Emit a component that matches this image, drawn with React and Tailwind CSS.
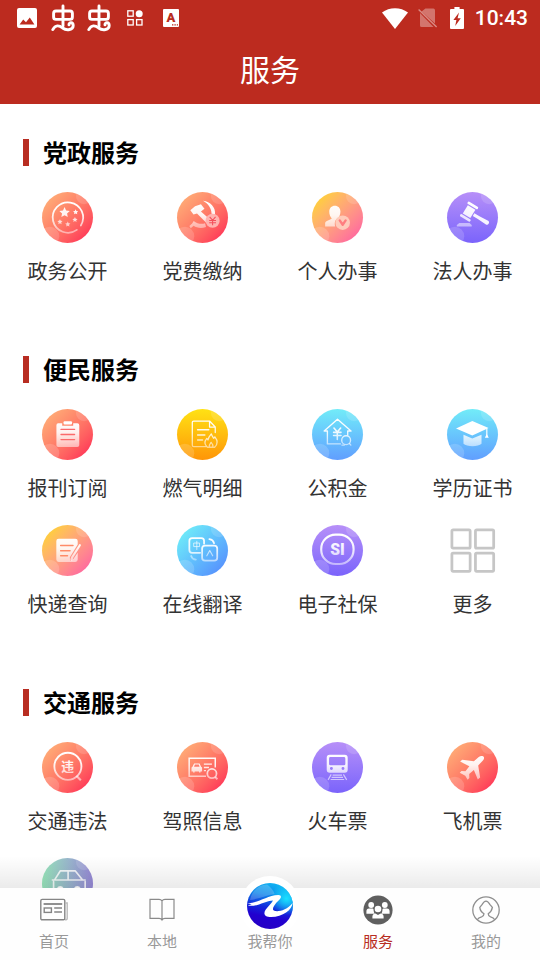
import { useState } from 'react';

const tones = {
  red: 'bg-linear-to-br from-[#ffad77] from-10% to-[#ff3358] to-90%',
  sunset: 'bg-linear-to-br from-[#ffd22e] from-10% to-[#ff65a0] to-90%',
  purple: 'bg-linear-to-b from-[#b78ff8] to-[#7b63fb]',
  amber: 'bg-linear-to-b from-[#ffe214] to-[#ff9508]',
  sky: 'bg-linear-to-b from-[#72ecf8] to-[#619efe]',
  ocean: 'bg-linear-to-br from-[#70edf8] from-10% to-[#5790fd] to-90%',
  mint: 'bg-linear-to-r from-[#98e6bb] to-[#9688d6]',
};

// shared white fade used by every glyph that sits on a coloured disc
const FADE = 'url(#fade)';

function FadeDefs() {
  return (
    <svg className="absolute size-0" aria-hidden="true">
      <defs>
        <linearGradient id="fade" gradientUnits="userSpaceOnUse" x1="0" y1="10" x2="0" y2="40">
          <stop offset="0" stopColor="#fff" />
          <stop offset="0.45" stopColor="#fff" stopOpacity="0.9" />
          <stop offset="1" stopColor="#fff" stopOpacity="0.5" />
        </linearGradient>
      </defs>
    </svg>
  );
}

function Star({ x, y, r }) {
  const points = Array.from({ length: 10 }, (_, i) => {
    const radius = i % 2 ? r * 0.48 : r;
    const a = (Math.PI / 5) * i - Math.PI / 2;
    return `${(x + radius * Math.cos(a)).toFixed(2)},${(y + radius * Math.sin(a)).toFixed(2)}`;
  });
  return <polygon points={points.join(' ')} fill={FADE} />;
}

const glyphs = {
  stars: (
    <>
      <path d="M35.5 38.6 A15.5 15.5 0 1 1 39.6 34.2" fill="none" stroke={FADE} strokeWidth="1.8" strokeLinecap="round" />
      <Star x={23} y={21} r={5.6} />
      <Star x={34.3} y={20.5} r={2.8} />
      <Star x={33.6} y={28.3} r={2.8} />
      <Star x={26.3} y={33} r={2.8} />
      <Star x={18.3} y={30.5} r={2.8} />
    </>
  ),
  party: (
    <>
      <path d="M26.5 9 C34 10 39.5 15.5 38.8 23 L35.2 22.3 C35.3 17 32 12 26.5 9 Z" fill={FADE} />
      <path d="M17 29.5 C20.5 32.3 25 33.2 28.6 31.8 L29.6 35.6 C24.5 37.8 19.8 36.4 17 34.4 L14 37 L12.6 34.6 L15.4 32.2 Z" fill={FADE} opacity="0.75" />
      <path d="M13.6 18.6 L18.4 14.6 L24.4 12.6 L28 17 L24.4 19.8 L33.6 28 L29.8 31.4 L20.4 21.8 L16.8 23 Z" fill={FADE} />
      <circle cx="36.3" cy="29.3" r="7.2" fill="#ffb3b0" />
      <path d="M33.3 25.3 L36.3 28.8 L39.3 25.3 M36.3 28.8 V34 M32.8 29 H39.8 M32.8 31.4 H39.8" fill="none" stroke="#f4505c" strokeWidth="1.1" />
    </>
  ),
  person: (
    <>
      <path d="M17.6 20 C17.6 16.4 20 14 23.3 14 C26.6 14 29 16.4 29 20 C29 23 27.8 25.4 26.4 26.6 C23.6 28 22.6 31.5 23.6 35.2 H13.4 V31.6 C13.8 29 18.6 28.8 20.2 27 C18.4 25.4 17.6 22.8 17.6 20 Z" fill={FADE} />
      <circle cx="31.3" cy="31.3" r="7.4" fill="#ffd0c0" fillOpacity="0.9" />
      <path d="M28.3 29 L31.3 33.4 L34.3 29" fill="none" stroke="#ff7d80" strokeWidth="2.4" strokeLinecap="round" strokeLinejoin="round" />
    </>
  ),
  gavel: (
    <>
      <g transform="rotate(31 22.5 20)" fill={FADE}>
        <rect x="18" y="15" width="9" height="10" />
        <rect x="16.4" y="11.2" width="12.2" height="2.8" rx="1.2" />
        <rect x="16.4" y="26" width="12.2" height="2.8" rx="1.2" />
        <path d="M28 18.6 H34 L44.5 18 C46.5 19 46.5 21.5 44.5 22.5 L34 21.8 H28 Z" />
      </g>
      <path d="M12.5 31.6 H23 L25.2 33.6 V35.2 H10 V33.6 Z" fill="#fff" opacity="0.5" />
    </>
  ),
  clipboard: (
    <>
      <path d="M16.5 14.6 H20.6 V17 H31.8 V14.6 H36 Q38 14.6 38 16.6 V37 Q38 38.8 36 38.8 H16.5 Q14.7 38.8 14.7 37 V16.6 Q14.7 14.6 16.5 14.6 Z" fill={FADE} />
      <rect x="22" y="12.4" width="8.6" height="3.4" rx="1" fill="#fff" />
      <path d="M19.4 20.8 H33.2 M19.4 26 H33.2 M19.4 31.2 H33.2" stroke="#fb6a6b" strokeWidth="1.4" strokeLinecap="round" />
    </>
  ),
  gas: (
    <g fill="none" stroke={FADE} strokeWidth="1.3" strokeLinejoin="round" strokeLinecap="round">
      <path d="M29.5 38.4 H17 Q15.6 38.4 15.6 37 V13.6 Q15.6 12.3 17 12.3 H33.2 L39 18.4 V24 M33.2 12.3 V18.4 H39" />
      <path d="M21 21.2 H32.4 M21 26.4 H28.4 M21 31.6 H26" strokeWidth="1.5" />
      <path d="M35 25.4 C35.8 28 37 28.8 37.4 30 L38.6 28.4 C41.5 32 41.6 36 38.4 39 H31 C27.6 36 28.2 32.6 30.4 30 L31.6 31.6 C32 29 33.2 27.4 35 25.4 Z M33 38.6 C32.6 36.4 34 35 34.8 34 C36.4 35.6 37 37 36.4 38.6" />
    </g>
  ),
  house: (
    <g fill="none" stroke={FADE} strokeWidth="1.4" strokeLinejoin="round" strokeLinecap="round">
      <path d="M15.7 22.4 H12.4 L26 10.4 L39.8 22.4 H36.4 V26.6 M15.7 22.4 V35.6 H29" />
      <path d="M22.4 19.4 L25.8 23.4 L29.2 19.4 M25.8 23.4 V31 M22 23.8 H29.6 M22 27 H29.6" strokeWidth="1.6" />
      <circle cx="34.8" cy="31.8" r="4.5" />
      <path d="M30.5 36.8 H33 M38.4 35.4 L39.6 36.8" />
    </g>
  ),
  graduate: (
    <>
      <path d="M25.8 12.2 L42.4 19.4 L25.8 27 L9.2 19.8 Z" fill="#fff" />
      <path d="M16.8 26.2 L25.8 30 L35.2 26.2 V35.4 C32 38.8 20 38.8 16.8 35.4 Z" fill={FADE} />
      <path d="M40.6 20 V28" stroke="#fff" strokeWidth="1.2" />
      <path d="M40.6 25.4 L42.6 29.4 H38.6 Z" fill="#fff" />
    </>
  ),
  edit: (
    <>
      <path d="M17 14 H34 Q36.4 14 36.4 16.4 V20 L28.4 33 L28.6 36.4 L32 34.6 L36.4 28.4 V35.2 Q36.4 37.6 34 37.6 H17 Q14.6 37.6 14.6 35.2 V16.4 Q14.6 14 17 14 Z" fill={FADE} />
      <path d="M19 21 H31.6 M19 26.2 H28.6 M19 31.4 H26" stroke="#ff8b68" strokeWidth="1.5" strokeLinecap="round" />
      <path d="M38.6 20.6 L31 32.6 L30 35.4" fill="none" stroke={FADE} strokeWidth="2.2" strokeLinecap="round" />
    </>
  ),
  translate: (
    <g fill="none" stroke={FADE} strokeLinejoin="round" strokeLinecap="round">
      <path d="M23.6 28.4 H15.4 Q12.6 28.4 12.6 25.6 V16.2 Q12.6 13.4 15.4 13.4 H24.8 Q27.6 13.4 27.6 16.2 V19" strokeWidth="1.8" />
      <rect x="25.6" y="21" width="15.4" height="15.4" rx="3" strokeWidth="1.8" />
      <path d="M17.4 18.4 H23 V22 H17.4 Z M20.2 16.6 V25" strokeWidth="0.9" strokeOpacity="0.8" />
      <path d="M30.4 31.4 L33.4 26 L36.4 31.4" strokeWidth="1.2" strokeOpacity="0.8" />
      <path d="M33 14.4 C35.6 14.8 37.2 16.2 37.8 18.6" strokeWidth="1.8" />
      <path d="M14.4 31.6 C15.2 34 16.8 35.2 19.2 35.4" strokeWidth="1.8" strokeOpacity="0.7" />
    </g>
  ),
  social: (
    <>
      <rect x="9.4" y="9.8" width="33" height="30" rx="14.6" fill="none" stroke={FADE} strokeWidth="2.2" />
      <text x="26" y="30.6" textAnchor="middle" fontSize="16" fontWeight="900" fill={FADE} className="font-[Roboto,sans-serif]">
        SI
      </text>
    </>
  ),
  violation: (
    <>
      <circle cx="26.4" cy="24.8" r="13.8" fill="none" stroke={FADE} strokeWidth="1.9" />
      <path d="M35 34.4 L39.6 39" stroke="#fff" strokeOpacity="0.55" strokeWidth="2.2" />
      <text x="26.2" y="29.6" textAnchor="middle" fontSize="13" fontWeight="700" fill={FADE}>
        违
      </text>
    </>
  ),
  license: (
    <g fill="none" stroke={FADE} strokeWidth="1.5">
      <path d="M29.6 35 H12.4 V16.6 H39 V26" />
      <path d="M27.4 22.6 H35.6 M27.4 26 H32.6 M27.4 29.2 H29.6" strokeWidth="1.3" />
      <path d="M17.4 22 H23 L24.6 25.2 L25.6 26 V30 H24 V31 H22.4 V30 H18 V31 H16.4 V30 H14.8 V26 L15.8 25.2 Z" fill={FADE} stroke="none" />
      <path d="M17.4 25.2 L18.2 23 H22.2 L23 25.2 Z" fill="#fd7b6b" stroke="none" />
      <circle cx="35.6" cy="32.2" r="4.7" strokeWidth="1.8" />
      <path d="M38.8 35.6 L41.2 38" strokeWidth="2" />
    </g>
  ),
  train: (
    <>
      <path fillRule="evenodd" d="M18 13 H33.4 Q36.4 13 36.4 16 V28.4 Q36.4 31.4 33.4 31.4 H18 Q15 31.4 15 28.4 V16 Q15 13 18 13 Z M18.8 15.4 Q17.4 15.4 17.4 16.8 V22.4 Q17.4 23.8 18.8 23.8 H32.6 Q34 23.8 34 22.4 V16.8 Q34 15.4 32.6 15.4 Z M19.8 25.6 A1.5 1.5 0 1 0 19.8 28.6 A1.5 1.5 0 1 0 19.8 25.6 Z M31.6 25.6 A1.5 1.5 0 1 0 31.6 28.6 A1.5 1.5 0 1 0 31.6 25.6 Z" fill={FADE} />
      <path d="M19.6 33 L16.4 38.6 M32 33 L35.4 38.6 M21 33.8 H30.6 M20 36 H31.6 M19 38.2 H32.8" fill="none" stroke="#fff" strokeOpacity="0.6" strokeWidth="1.2" />
    </>
  ),
  plane: (
    <path d="M36.8 14.6 C38.4 15.4 38 17.4 36.6 18.8 L31.8 24 L33.8 36.2 L31.4 38.2 L27.4 28.6 L22.6 32.6 L22.8 36.6 L21 38.6 L18.6 34.4 L13 31.4 L14.8 29.6 L18.8 29.8 L22.8 24.6 L13.4 20 L15.6 18 L27.4 19.6 L32.4 15.2 C34 14 35.6 14 36.8 14.6 Z" fill={FADE} />
  ),
  taxi: (
    <g fill="none" stroke="#fff" strokeOpacity="0.85" strokeWidth="1.7" strokeLinejoin="round" strokeLinecap="round">
      <path d="M10.6 22.4 H44 M13 22 L18.6 13.2 H34 L41 22 M26.6 13.2 V22 M11.8 24 V42 M44 24 V42" />
      <circle cx="18.6" cy="32" r="2.6" fill="#fff" />
      <circle cx="36" cy="32" r="2.6" fill="#fff" />
    </g>
  ),
};

const sections = [
  {
    title: '党政服务',
    items: [
      { label: '政务公开', glyph: 'stars', tone: 'red' },
      { label: '党费缴纳', glyph: 'party', tone: 'red' },
      { label: '个人办事', glyph: 'person', tone: 'sunset' },
      { label: '法人办事', glyph: 'gavel', tone: 'purple' },
    ],
  },
  {
    title: '便民服务',
    items: [
      { label: '报刊订阅', glyph: 'clipboard', tone: 'red' },
      { label: '燃气明细', glyph: 'gas', tone: 'amber' },
      { label: '公积金', glyph: 'house', tone: 'sky' },
      { label: '学历证书', glyph: 'graduate', tone: 'sky' },
      { label: '快递查询', glyph: 'edit', tone: 'sunset' },
      { label: '在线翻译', glyph: 'translate', tone: 'ocean' },
      { label: '电子社保', glyph: 'social', tone: 'purple' },
      { label: '更多' },
    ],
  },
  {
    title: '交通服务',
    items: [
      { label: '交通违法', glyph: 'violation', tone: 'red' },
      { label: '驾照信息', glyph: 'license', tone: 'red' },
      { label: '火车票', glyph: 'train', tone: 'purple' },
      { label: '飞机票', glyph: 'plane', tone: 'red' },
      { label: '', glyph: 'taxi', tone: 'mint' },
    ],
  },
];

function ServiceIcon({ glyph, tone }) {
  if (!glyph) {
    return (
      <svg viewBox="0 0 52 52" className="size-[51px]" fill="none" stroke="#c6c6c6" strokeWidth="2.8" aria-hidden="true">
        <rect x="5" y="5" width="18.6" height="18.6" rx="1.2" />
        <rect x="29" y="5" width="18.6" height="18.6" rx="1.2" />
        <rect x="5" y="28.6" width="18.6" height="18.6" rx="1.2" />
        <rect x="29" y="28.6" width="18.6" height="18.6" rx="1.2" />
      </svg>
    );
  }
  return (
    <span className={`size-[51px] overflow-hidden rounded-full ${tones[tone]}`}>
      <svg viewBox="0 0 52 52" className="size-full" aria-hidden="true">
        <circle cx="43" cy="4" r="8.4" fill="#fff" fillOpacity="0.14" />
        <circle cx="8" cy="45" r="9.6" fill="#fff" fillOpacity="0.16" />
        {glyphs[glyph]}
      </svg>
    </span>
  );
}

function Section({ title, items }) {
  return (
    <section>
      <h2 className="ml-[23px] h-[27px] border-l-6 border-[#b82d22] pl-3.5 text-2xl leading-[26px] font-bold text-black">
        {title}
      </h2>
      <div className="mt-[26px] grid grid-cols-4 gap-y-[23px]">
        {items.map((item) => (
          <button key={item.glyph || item.label} type="button" className="flex flex-col items-center gap-3.5">
            <ServiceIcon glyph={item.glyph} tone={item.tone} />
            <span className="h-7 text-xl leading-7 text-[#333]">{item.label}</span>
          </button>
        ))}
      </div>
    </section>
  );
}

function BugIcon() {
  return (
    <svg viewBox="0 0 24 28" className="h-7 w-6" fill="none" stroke="#fff" strokeWidth="2.9" strokeLinecap="round" strokeLinejoin="round">
      <path d="M12 2 V22 M5 7 H19 Q21.4 7 21.4 9.4 V13 Q21.4 15.4 19 15.4 H5 Q2.6 15.4 2.6 13 V9.4 Q2.6 7 5 7 Z" />
      <path d="M1.8 25.6 C4.4 20.8 8 21 11.6 24 C16 27.2 22.2 25.6 22.2 21.4 C22.2 18 17.8 18 18 20.8" />
    </svg>
  );
}

function StatusBar() {
  return (
    <div className="flex h-9 items-center justify-between pr-3 pl-[17px] text-white">
      <div className="flex items-center" aria-hidden="true">
        <svg viewBox="0 0 20 20" className="size-5" fill="#fff">
          <path fillRule="evenodd" d="M2 0 H18 Q20 0 20 2 V18 Q20 20 18 20 H2 Q0 20 0 18 V2 Q0 0 2 0 Z M2.6 16.4 H17.4 L12.8 9.6 L9 14.2 L6.2 11.6 Z" />
        </svg>
        <span className="ml-3.5 flex gap-3">
          <BugIcon />
          <BugIcon />
        </span>
        <svg viewBox="0 0 16 16" className="ml-4 size-4" fill="none" stroke="#fff" strokeWidth="1.3">
          <rect x="0.8" y="0.8" width="5.4" height="5.4" />
          <rect x="0.8" y="9.6" width="5.4" height="5.4" />
          <rect x="9.6" y="9.6" width="5.4" height="5.4" />
          <circle cx="12.2" cy="3.8" r="3.5" fill="#fff" stroke="none" />
        </svg>
        <svg viewBox="0 0 16 18" className="ml-5 h-[18px] w-4">
          <rect width="16" height="18" rx="1" fill="#fff" />
          <text x="8" y="13" textAnchor="middle" fontSize="13" fontWeight="900" fill="#b82d22" className="font-[Roboto,sans-serif]">
            A
          </text>
          <path d="M9 15.8 H15" stroke="#b82d22" strokeWidth="1.2" strokeDasharray="1.4 1" />
        </svg>
      </div>
      <div className="flex items-center">
        <svg viewBox="0 0 26 21" className="h-[21px] w-[26px]" fill="#fff" aria-hidden="true">
          <path d="M13 21 L0 4.6 C7.4 -1.3 18.6 -1.3 26 4.6 Z" />
        </svg>
        <svg viewBox="0 0 20 20" className="ml-2.5 size-5" aria-hidden="true">
          <path d="M7.4 0.6 H15.4 Q17 0.6 17 2.2 V15.6 L3.6 3.6 Z M2 5 L15.6 19 H3.6 Q2 19 2 17.4 Z" fill="#fff" fillOpacity="0.35" />
          <path d="M0.6 1.4 L18.6 19" stroke="#fff" strokeOpacity="0.45" strokeWidth="1.4" />
        </svg>
        <svg viewBox="0 0 14 22" className="ml-3 h-[22px] w-3.5" fill="#fff" aria-hidden="true">
          <path fillRule="evenodd" d="M4.4 0 H9.6 V2 H13 Q14 2 14 3 V21 Q14 22 13 22 H1 Q0 22 0 21 V3 Q0 2 1 2 H4.4 Z M9 5.6 L3.4 13 H6.4 L5.2 19 L10.8 11.2 H7.6 Z" />
        </svg>
        <time className="ml-[11px] font-[Roboto,sans-serif] text-[21px] leading-6 font-medium">10:43</time>
      </div>
    </div>
  );
}

const tabIcons = {
  home: (
    <svg viewBox="0 0 28 28" className="size-7" fill="none" stroke="#858585" strokeWidth="1.4" aria-hidden="true">
      <rect x="0.8" y="3.4" width="24" height="20.4" rx="1.4" />
      <path d="M25 7 H27.2 V22.4 Q27.2 23.8 25 23.8" stroke="#bbb" />
      <path d="M3.6 8 H22.2" strokeWidth="1.8" />
      <rect x="4.2" y="12" width="7.2" height="4.4" />
      <path d="M14.2 12 H22 M14.2 16 H22" />
    </svg>
  ),
  local: (
    <svg viewBox="0 0 28 28" className="size-7" fill="none" stroke="#8a8a8a" strokeWidth="1.2" aria-hidden="true">
      <path d="M14 4.8 Q13 3.4 11 3.4 H2 V22.4 H11 Q13 22.4 14 24 Q15 22.4 17 22.4 H26 V3.4 H17 Q15 3.4 14 4.8 Z M14 4.8 V24" />
    </svg>
  ),
  services: (
    <svg viewBox="0 0 30 30" className="size-[30px]" aria-hidden="true">
      <circle cx="15" cy="15" r="14.6" fill="#5f5f5f" />
      <g fill="#fff">
        <circle cx="8.2" cy="10" r="2.9" />
        <circle cx="21.8" cy="10" r="2.9" />
        <path d="M3.4 18.8 V16.4 Q3.4 13.8 6 13.6 H9.6 Q10.8 13.8 10.6 15.6 Q10.8 17.6 11.6 18.8 Z" />
        <path d="M26.6 18.8 V16.4 Q26.6 13.8 24 13.6 H20.4 Q19.2 13.8 19.4 15.6 Q19.2 17.6 18.4 18.8 Z" />
        <circle cx="15" cy="14" r="3.3" />
        <path d="M9.4 23.4 V21.6 Q9.4 18.8 12.4 18.4 L15 20 L17.6 18.4 Q20.6 18.8 20.6 21.6 V23.4 Z" />
      </g>
    </svg>
  ),
  mine: (
    <svg viewBox="0 0 28 28" className="size-7" fill="none" stroke="#8f8f8f" strokeWidth="1.3" aria-hidden="true">
      <circle cx="14" cy="14" r="13.2" />
      <path d="M5.2 23.8 Q6.4 21.6 9.6 20.8 Q12 20 12 17.8 Q8.2 15.4 7.8 11.4 L10 8.6 Q14 1.6 18 8.6 L20.4 11.4 Q19.6 15.6 16.2 17.8 Q16.2 20 18.6 20.8 Q21.6 21.6 22.8 23.8" />
    </svg>
  ),
};

function HelpBall() {
  return (
    <span className="absolute bottom-6 left-1/2 -translate-x-1/2 rounded-full bg-white p-[7px]">
      <svg viewBox="0 0 46 46" className="size-[46px]" aria-hidden="true">
        <defs>
          <linearGradient id="ball" x1="0.62" y1="0" x2="0.4" y2="1">
            <stop offset="0" stopColor="#0fb4f2" />
            <stop offset="0.28" stopColor="#0c86ea" />
            <stop offset="0.55" stopColor="#1228dc" />
            <stop offset="0.75" stopColor="#2200cf" />
            <stop offset="1" stopColor="#2600c4" />
          </linearGradient>
          <radialGradient id="glow" cx="0.86" cy="0.34" r="0.36">
            <stop offset="0" stopColor="#1be0ff" />
            <stop offset="1" stopColor="#1be0ff" stopOpacity="0" />
          </radialGradient>
        </defs>
        <circle cx="23" cy="23" r="23" fill="url(#ball)" />
        <circle cx="23" cy="23" r="23" fill="url(#glow)" />
        <path d="M3 17 C5 7 12 1.6 20 1.4 C24 4 27 8 27.6 11 C20 12 12 16 3 17 Z" fill="#fff" fillOpacity="0.2" />
        <path d="M0.2 20 C11 20.6 19 12.6 31.4 12 C35 12 34.4 15 31.6 17.6 C28 21 25.6 24.6 26 26.6 C27 29.6 38.6 29 45.6 20 C45 27 36 33.8 24 34 C17.6 34 16 30.8 18.6 26.8 C21 23.2 25 20 26 17.4 C18 17.4 10.6 24.4 0.6 22.4 L4.6 21.2 Z" fill="#fff" />
      </svg>
    </span>
  );
}

const tabs = [
  { id: 'home', label: '首页' },
  { id: 'local', label: '本地' },
  { id: 'help', label: '我帮你' },
  { id: 'services', label: '服务' },
  { id: 'mine', label: '我的' },
];

function TabBar() {
  const [active, setActive] = useState('services');

  return (
    <nav className="relative grid h-18 shrink-0 grid-cols-5 bg-[#fefefe]">
      <div className="pointer-events-none absolute inset-x-0 bottom-full h-8 bg-linear-to-b from-transparent to-black/8" />
      {tabs.map((tab) => (
        <button
          key={tab.id}
          type="button"
          onClick={() => setActive(tab.id)}
          className="relative flex flex-col items-center"
        >
          <span className="flex h-11 items-center">{tab.id === 'help' ? <HelpBall /> : tabIcons[tab.id]}</span>
          <span className={`relative text-[15px] leading-[18px] ${active === tab.id ? 'text-[#b82d22]' : 'text-[#999]'}`}>
            {tab.label}
          </span>
        </button>
      ))}
    </nav>
  );
}

export default function App() {
  return (
    <div className="flex h-screen flex-col bg-white font-['Noto_Sans_CJK_SC',sans-serif]">
      <FadeDefs />
      <header className="shrink-0 bg-[#bc2b1f]">
        <StatusBar />
        <h1 className="h-17 text-center text-3xl leading-16 text-white">服务</h1>
      </header>
      <main className="flex min-h-0 flex-1 flex-col gap-[71px] overflow-y-auto pt-[35px] [scrollbar-width:none]">
        {sections.map((section) => (
          <Section key={section.title} title={section.title} items={section.items} />
        ))}
      </main>
      <TabBar />
    </div>
  );
}
